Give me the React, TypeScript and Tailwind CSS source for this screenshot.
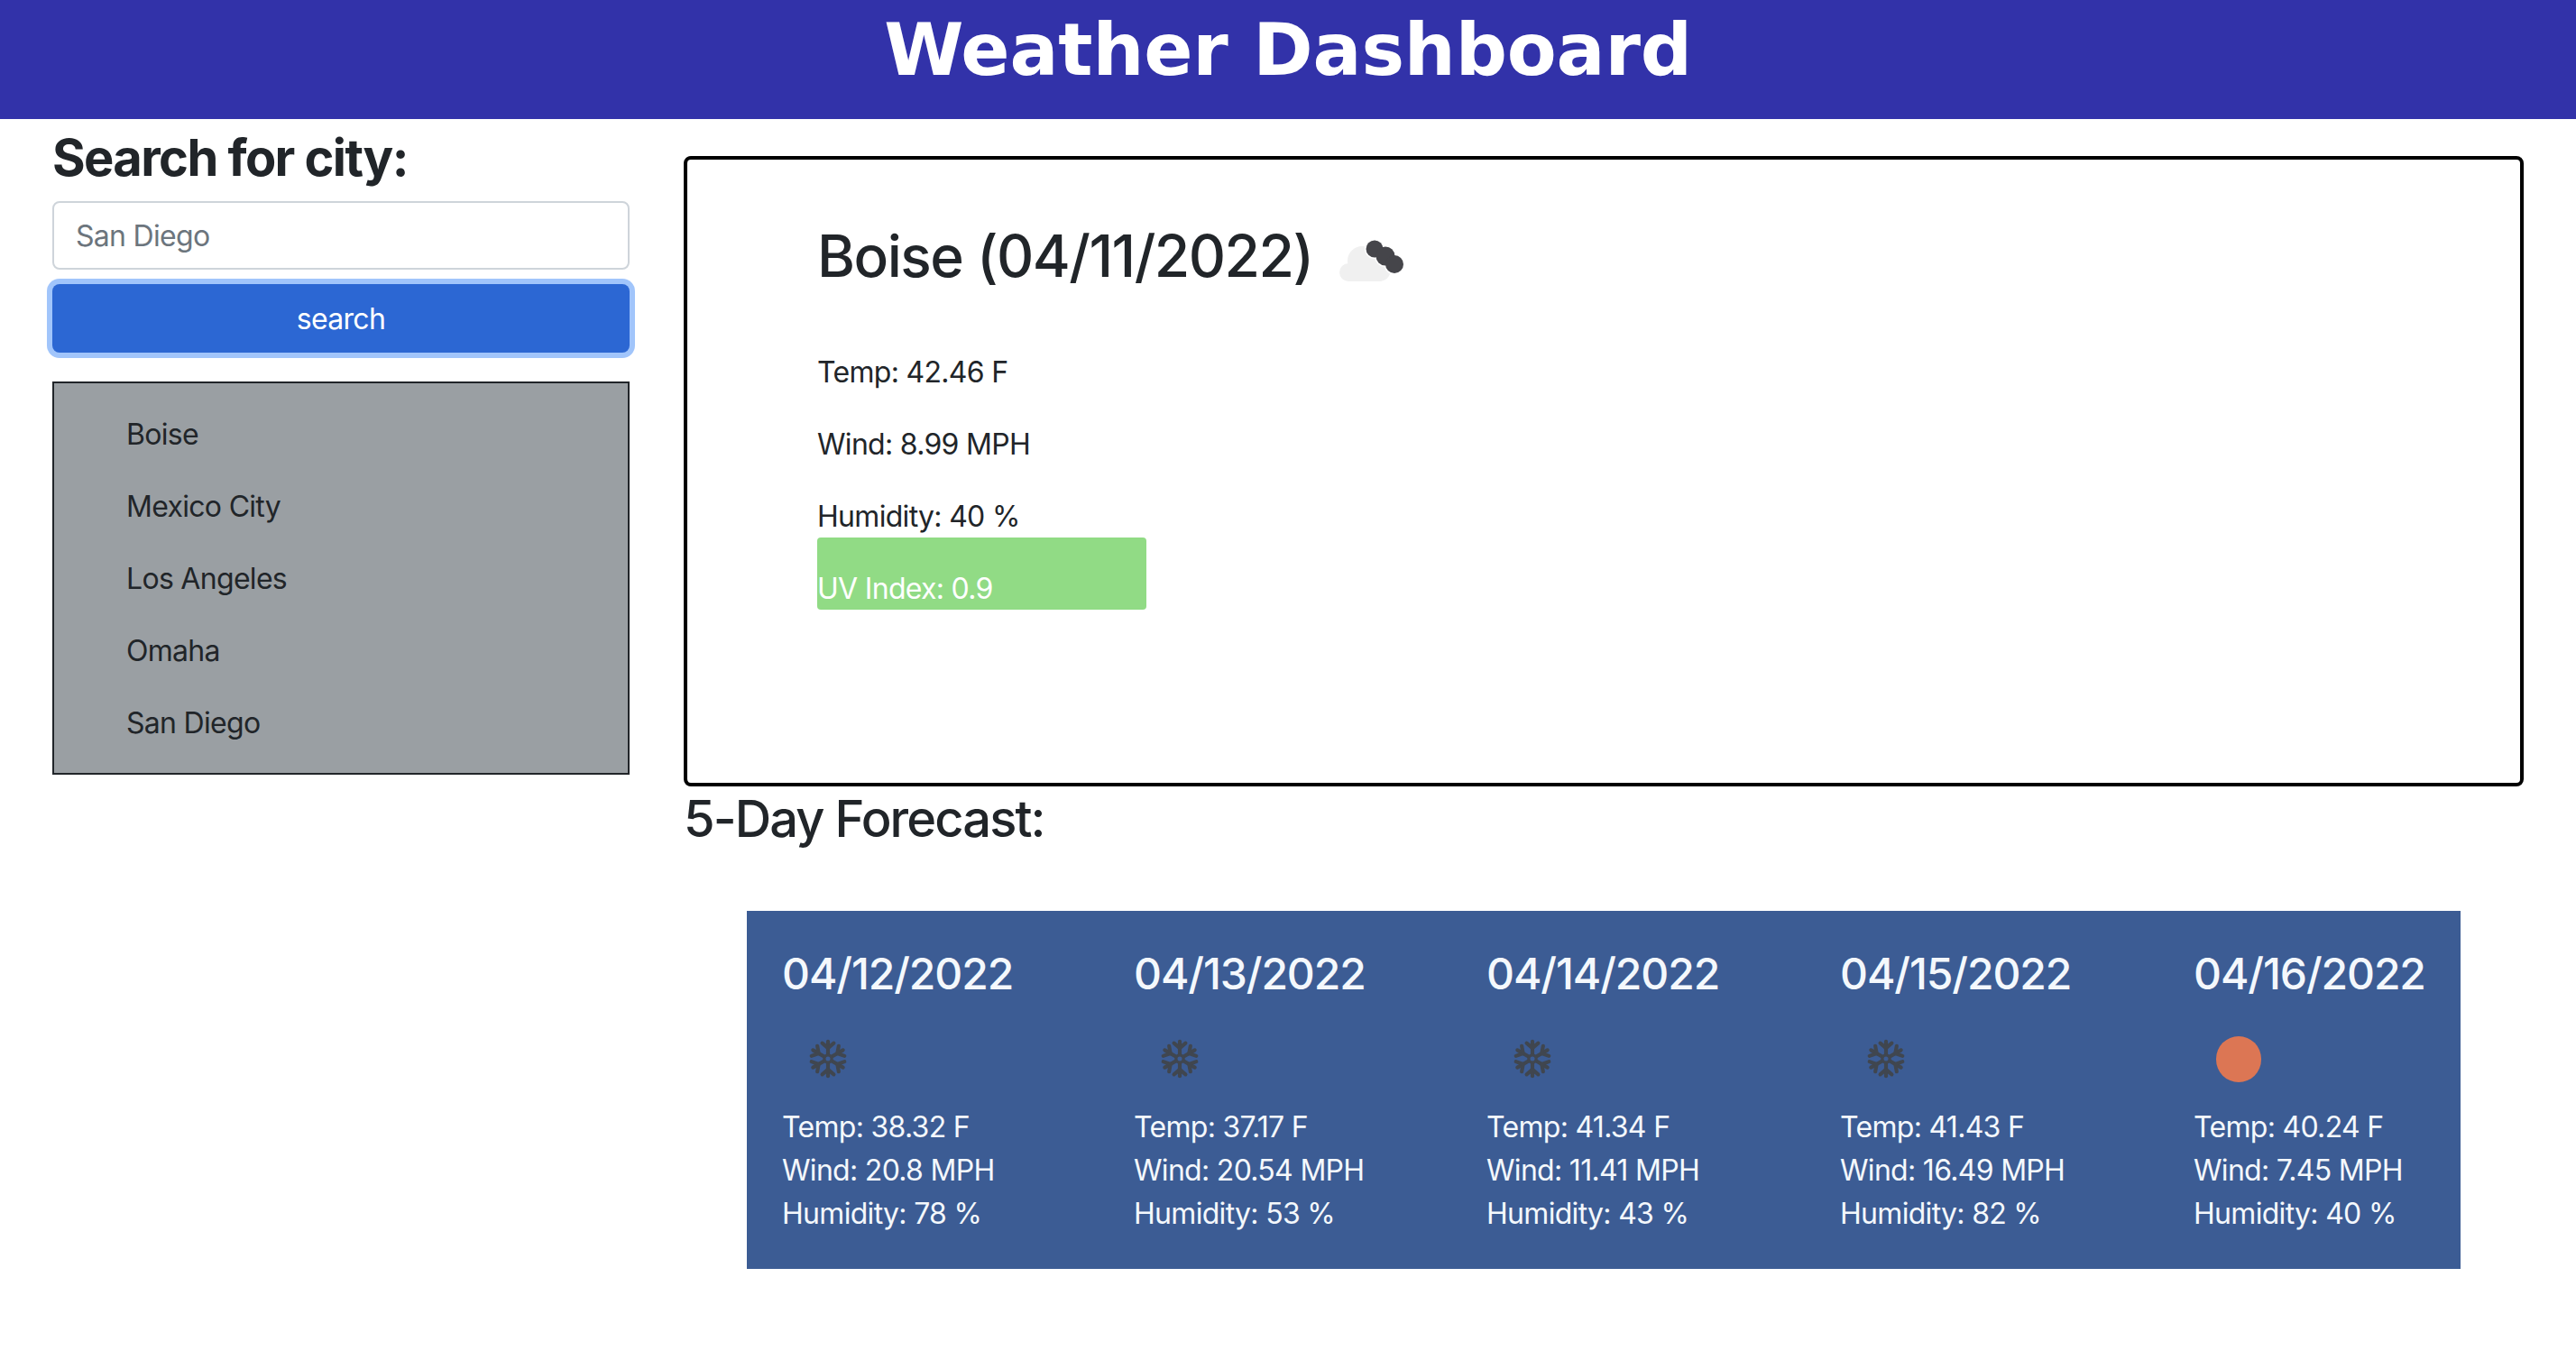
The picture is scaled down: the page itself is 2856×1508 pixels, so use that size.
const font = "[font-family:Inter,'Liberation_Sans',sans-serif]";

const cities = ["Boise", "Mexico City", "Los Angeles", "Omaha", "San Diego"];

const days = [
  { date: "04/12/2022", temp: "38.32", wind: "20.8", hum: "78", icon: "snow", w: "w-[390px]" },
  { date: "04/13/2022", temp: "37.17", wind: "20.54", hum: "53", icon: "snow", w: "w-[391px]" },
  { date: "04/14/2022", temp: "41.34", wind: "11.41", hum: "43", icon: "snow", w: "w-[392px]" },
  { date: "04/15/2022", temp: "41.43", wind: "16.49", hum: "82", icon: "snow", w: "w-[392px]" },
  { date: "04/16/2022", temp: "40.24", wind: "7.45", hum: "40", icon: "sun", w: "w-[255px]" },
];

function Snowflake() {
  const arm = (
    <g>
      <path d="M24 24V3" />
      <path d="M17 5l7 6 7-6" />
    </g>
  );
  return (
    <svg viewBox="0 0 48 48" className="ml-[29px] mt-[4px] h-[44px] w-[44px] blur-[0.6px]" fill="none" stroke="#40464f" strokeWidth="4.5" strokeLinecap="round" strokeLinejoin="round">
      {[0, 60, 120, 180, 240, 300].map((a) => (
        <g key={a} transform={`rotate(${a} 24 24)`}>{arm}</g>
      ))}
      <circle cx="24" cy="24" r="4.5" fill="#3c5c94" stroke="#40464f" strokeWidth="3.5" />
    </svg>
  );
}

function Sun() {
  return (
    <div className="ml-[25px] mt-[1px] h-[51px] w-[50px] rounded-full bg-[#dc7654]" />
  );
}

function CloudIcon() {
  return (
    <svg viewBox="0 0 76 48" className="ml-[27px] mt-[21px] h-[48px] w-[76px] shrink-0 blur-[0.6px]">
      <g fill="#f0f0f0">
        <circle cx="27" cy="23" r="16" />
        <circle cx="12" cy="36" r="10" />
        <circle cx="46" cy="33" r="13" />
        <rect x="12" y="30" width="36" height="16" />
      </g>
      <g fill="#ffffff">
        <circle cx="41" cy="10" r="11" />
        <circle cx="53" cy="18" r="12" />
        <circle cx="63" cy="27" r="11.5" />
      </g>
      <g fill="#45454a">
        <circle cx="41" cy="10" r="9.5" />
        <circle cx="53" cy="18" r="10.5" />
        <circle cx="63" cy="27" r="10" />
      </g>
    </svg>
  );
}

export default function App() {
  return (
    <div className={`h-[1508px] w-[2856px] overflow-hidden bg-white text-[32px] leading-[48px] tracking-[-0.7px] text-[#212529] ${font}`}>
      <header className="h-[132px] bg-[#3232a9] text-center">
        <h1 className="pt-[2px] text-[80px] leading-[108px] font-bold tracking-[-0.15px] text-white [font-family:'DejaVu_Sans',sans-serif]">
          Weather Dashboard
        </h1>
      </header>

      <div className="flex">
        <aside className="ml-[58px] w-[640px] shrink-0 pt-[10px]">
          <h3 className="mb-[14px] text-[56px] leading-[67px] font-bold tracking-[-1.6px]">Search for city:</h3>
          <input
            readOnly
            placeholder="San Diego"
            className="mb-[16px] block h-[76px] w-full rounded-[8px] border-2 border-[#ced4da] bg-white px-[24px] text-[32px] tracking-[-0.7px] outline-none placeholder:text-[#6c757d]"
          />
          <button className="block h-[76px] w-full rounded-[8px] bg-[#2c67d3] pt-[2px] text-[32px] text-white shadow-[0_0_0_6px_#a1c5fb]">
            search
          </button>
          <ul className="mt-[32px] border-2 border-[#212529] bg-[#9a9fa3] pt-[33px] pl-[80px]">
            {cities.map((c) => (
              <li key={c} className="mb-[32px] h-[48px] last:mb-[31px]">{c}</li>
            ))}
          </ul>
        </aside>

        <main className="ml-[60px] w-[2040px] shrink-0">
          <section className="mt-[41px] h-[699px] rounded-[8px] border-4 border-black pt-[68px] pl-[144px]">
            <div className="flex h-[144px] items-start">
              <h2 className="text-[64px] leading-[77px] font-medium tracking-[-1.5px]">Boise (04/11/2022)</h2>
              <CloudIcon />
            </div>
            <p className="mb-[32px]">Temp: 42.46 F</p>
            <p className="mb-[32px]">Wind: 8.99 MPH</p>
            <p className="mb-[-1px]">Humidity: 40 %</p>
            <div className="flex h-[80px] w-[365px] items-end rounded-[4px] bg-[#91db85] leading-[46px] text-white">UV Index: 0.9</div>
          </section>

          <h3 className="mt-[3px] text-[56px] leading-[67px] font-medium tracking-[-1.9px]">5-Day Forecast:</h3>

          <div className="mt-[68px] ml-[70px] flex h-[397px] w-[1900px] bg-[#3c5c94] pt-[41px] pl-[39px] text-[#f4f8fc]">
            {days.map((d) => (
              <div key={d.date} className={`${d.w} shrink-0`}>
                <h4 className="text-[48px] leading-[58px] font-medium tracking-[-1.1px]">{d.date}</h4>
                <div className="mt-[39px] flex h-[78px] items-start">
                  {d.icon === "snow" ? <Snowflake /> : <Sun />}
                </div>
                <p>Temp: {d.temp} F</p>
                <p>Wind: {d.wind} MPH</p>
                <p>Humidity: {d.hum} %</p>
              </div>
            ))}
          </div>
        </main>
      </div>
    </div>
  );
}
